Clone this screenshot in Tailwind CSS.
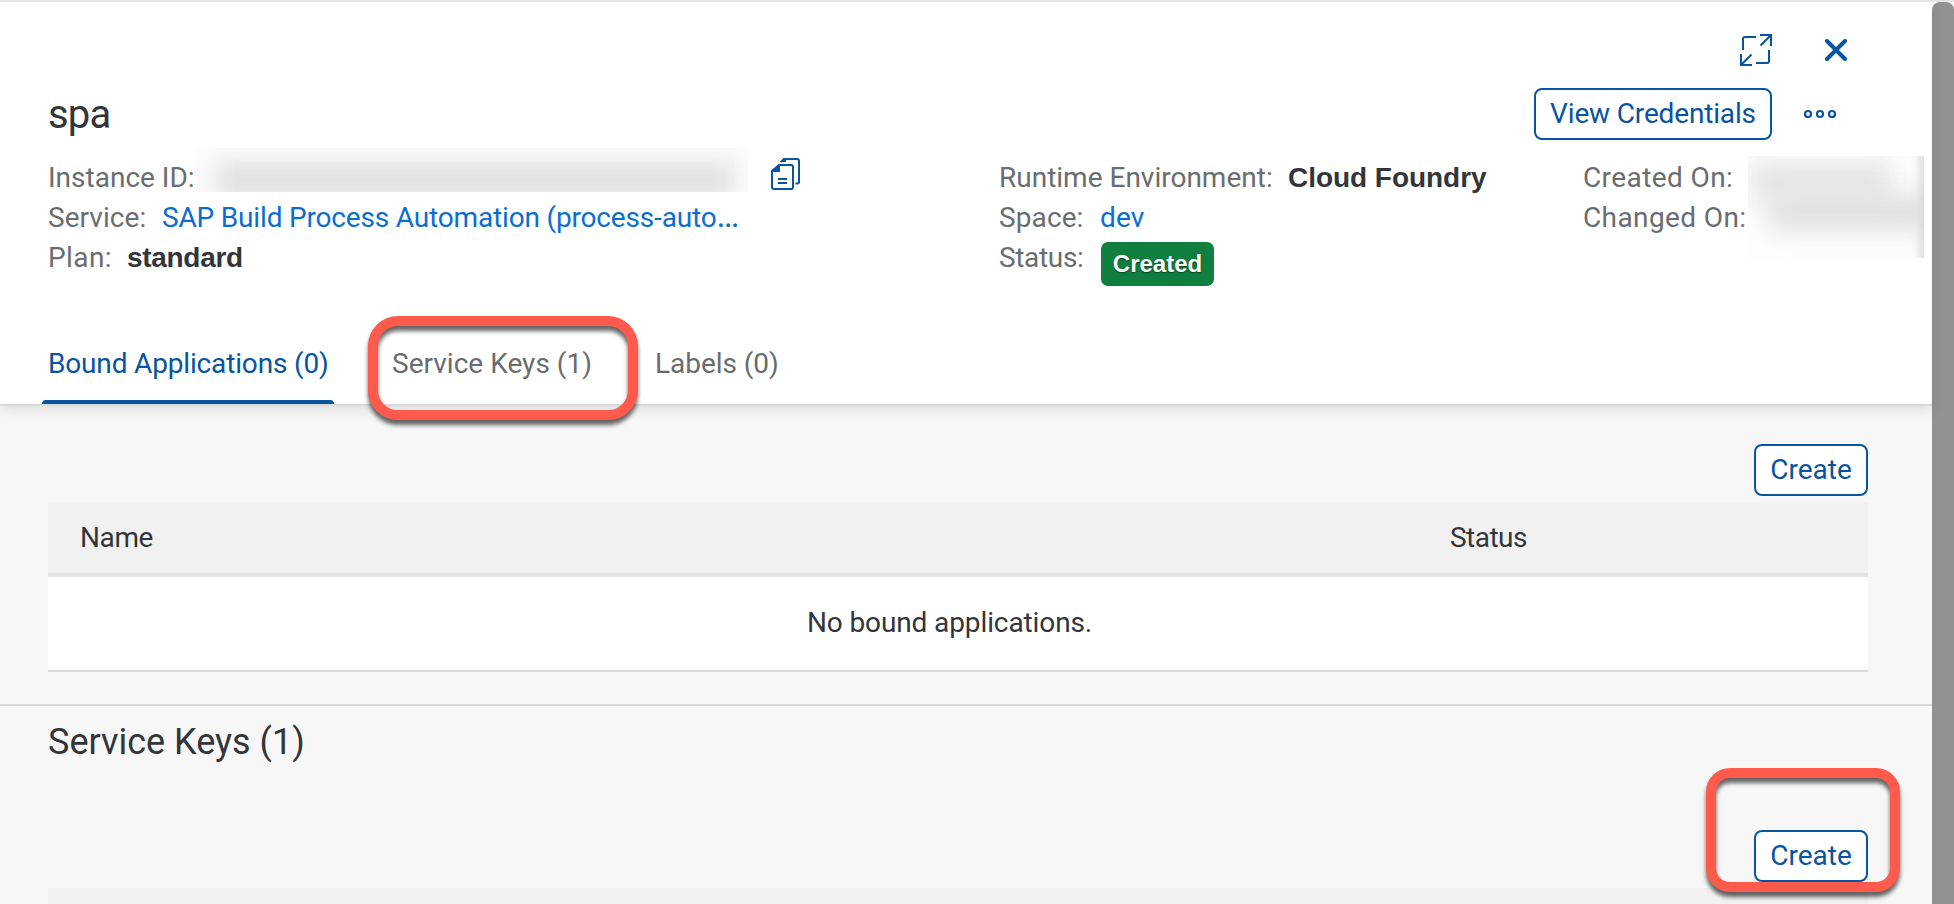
<!DOCTYPE html>
<html lang="en">
<head>
<meta charset="utf-8">
<title>spa</title>
<script src="https://cdn.jsdelivr.net/npm/@tailwindcss/browser@4"></script>
</head>
<body class="bg-white">
<div class="flex w-[1954px] h-[904px] overflow-hidden border-t-2 border-[#e5e5e5] font-['Roboto','Liberation_Sans',sans-serif] text-[28px] leading-[40px] text-[#32363a] whitespace-nowrap">
  <main class="w-[1932px] flex flex-col bg-[#f7f7f7]">

    <header class="relative z-10 h-[404px] shrink-0 bg-white border-b-2 border-[#d9d9d9] shadow-[0_4px_12px_rgba(0,0,0,0.10)]">
      <!-- window actions -->
      <div class="flex justify-end items-center gap-[53px] pt-[32px] pr-[85px] text-[#0854a0]">
        <svg class="w-8 h-8" viewBox="0 0 32 32" fill="none" stroke="currentColor" stroke-width="2"><path d="M3 16V5a2 2 0 0 1 2-2H16M29 16V27a2 2 0 0 1-2 2H16M20 1H31V12M31 1L20.500 11.500M1 20V31H12M1 31L11.500 20.500"/></svg>
        <svg class="w-[22px] h-[22px]" viewBox="0 0 22 22" fill="none" stroke="currentColor" stroke-width="4" stroke-linecap="round"><path d="M2 2L20 20M20 2L2 20"/></svg>
      </div>
      <!-- title row -->
      <div class="flex items-center h-[52px] mt-[22px] pl-[48px] pr-[96px]">
        <h1 class="mt-[2px] text-[40px] leading-[48px] tracking-[-0.8px]">spa</h1>
        <button class="ml-auto w-[238px] h-[52px] rounded-lg border-2 border-[#0854a0] text-[#0854a0] tracking-[-0.16px]">View Credentials</button>
        <svg class="ml-[32px] w-[32px] h-[10px] text-[#0854a0]" viewBox="0 0 32 10" fill="none" stroke="currentColor" stroke-width="2.200"><circle cx="4" cy="5" r="3"/><circle cx="16" cy="5" r="3"/><circle cx="28" cy="5" r="3"/></svg>
      </div>
      <!-- instance details -->
      <div class="grid grid-cols-[951px_584px_1fr] mt-[18px] pl-[48px] h-[186px] text-[#6a6d70]">
        <div>
          <div class="flex h-[40px]">
            <span class="w-[148px]">Instance ID:</span>
            <div class="relative overflow-hidden w-[552px] h-[44px] -mt-[10px] bg-[#fbfbfb]">
              <div class="absolute left-[20px] right-[14px] top-[14px] h-[36px] bg-[#e2e2e3] blur-[10px]"></div>
            </div>
            <svg class="ml-[23px] w-[29px] h-8 text-[#0854a0]" viewBox="0 0 29 32" fill="none" stroke="currentColor" stroke-width="2"><path d="M8 7H20a2 2 0 0 1 2 2V29a2 2 0 0 1-2 2H3a2 2 0 0 1-2-2V13Z" stroke-linejoin="round"/><path d="M1 13L8 7V14H1Z" fill="currentColor" stroke="none"/><path d="M8 7V13H1" /><path d="M10 4L13 1H26a2 2 0 0 1 2 2V24a1.500 1.500 0 0 1-1.500 1.500H24.500M7 21H16M7 25H16"/><path d="M9 4L13 0H15V4Z" fill="currentColor" stroke="none"/></svg>
          </div>
          <div class="flex h-[40px]"><span class="w-[114px] tracking-[0.05px]">Service:</span><a class="text-[#0a6ed1] tracking-[-0.17px]">SAP Build Process Automation (process-auto<span class="text-[34px] leading-none">…</span></a></div>
          <div class="flex h-[40px]"><span class="w-[79px] tracking-[0.4px]">Plan:</span><b class="text-[#32363a] font-['Liberation_Sans',sans-serif] tracking-[-0.31px]">standard</b></div>
        </div>
        <div>
          <div class="flex h-[40px]"><span class="w-[289px]">Runtime Environment:</span><b class="text-[#32363a] font-['Liberation_Sans',sans-serif] tracking-[-0.04px]">Cloud Foundry</b></div>
          <div class="flex h-[40px]"><span class="w-[101px] tracking-[0.1px]">Space:</span><a class="text-[#0a6ed1] tracking-[0.2px]">dev</a></div>
          <div class="flex h-[40px]"><span class="w-[102px] tracking-[-0.34px]">Status:</span><b class="mt-1 w-[113px] h-[44px] rounded-[7px] bg-[#107e3e] text-white text-center text-[24px] font-['Liberation_Sans',sans-serif] leading-[43px] [text-shadow:0_1px_2px_rgba(0,0,0,0.5)]">Created</b></div>
        </div>
        <div class="flex">
          <div class="w-[165px]">
            <div class="h-[40px] tracking-[0.4px]">Created On:</div>
            <div class="h-[40px] tracking-[0.4px]">Changed On:</div>
          </div>
          <div class="relative overflow-hidden w-[176px] h-[102px] -mt-[2px] bg-[#fdfdfd]">
            <div class="absolute left-[4px] top-[6px] w-[138px] h-[38px] bg-[#e4e4e4] blur-[12px]"></div>
            <div class="absolute left-[20px] top-[38px] w-[172px] h-[36px] bg-[#e0e0e0] blur-[12px]"></div>
            <div class="absolute left-[172px] -top-[10px] w-[14px] h-[130px] bg-[#d8d8d8] blur-[5px]"></div>
          </div>
        </div>
      </div>
      <!-- tabs -->
      <nav class="flex h-[60px] pl-[42px] text-[#6a6d70]">
        <div class="relative w-[292px] pl-[6px] text-[#0854a0] tracking-[-0.16px]">Bound Applications (0)<span class="absolute inset-x-0 bottom-0 h-1 rounded-t bg-[#0854a0]"></span></div>
        <div class="ml-[58px] w-[263px] tracking-[0.02px]">Service Keys (1)</div>
        <div class="tracking-[-0.05px]">Labels (0)</div>
      </nav>
      <div class="absolute left-[368px] top-[314px] w-[270px] h-[104px] rounded-[30px] border-[10px] border-[#ff5a4c] [filter:drop-shadow(0_5px_2px_rgba(0,0,0,0.6))]"></div>
    </header>

    <section class="pt-[38px] pl-[48px] pr-[64px]">
      <div class="flex justify-end"><button class="w-[114px] h-[52px] rounded-lg border-2 border-[#0854a0] bg-white text-[#0854a0]">Create</button></div>
      <div class="mt-[6px] grid grid-cols-[1370px_1fr] h-[75px] pl-[32px] pt-[16px] bg-[#f1f1f1] border-b-4 border-[#e4e4e4]">
        <div class="tracking-[-0.4px]">Name</div>
        <div class="tracking-[-0.52px]">Status</div>
      </div>
      <div class="h-[95px] pt-[26px] pr-[17px] bg-white border-b-2 border-[#d9d9d9] text-center tracking-[-0.11px]">No bound applications.</div>
    </section>

    <section class="relative mt-[32px] pt-[14px] pl-[48px] pr-[64px] border-t-2 border-[#d9d9d9]">
      <h2 class="text-[36px] leading-[44px]">Service Keys (1)</h2>
      <div class="flex justify-end mt-[66px]"><button class="w-[114px] h-[52px] rounded-lg border-2 border-[#0854a0] bg-white text-[#0854a0]">Create</button></div>
      <div class="mt-[6px] h-[75px] bg-[#f1f1f1]"></div>
      <div class="absolute left-[1706px] top-[62px] w-[194px] h-[124px] rounded-[24px] border-[10px] border-[#ff5a4c] [filter:drop-shadow(0_5px_2px_rgba(0,0,0,0.6))]"></div>
    </section>
  </main>
  <div class="w-[22px] rounded-tl-lg rounded-tr-lg bg-[#929292]"></div>
</div>
</body>
</html>
